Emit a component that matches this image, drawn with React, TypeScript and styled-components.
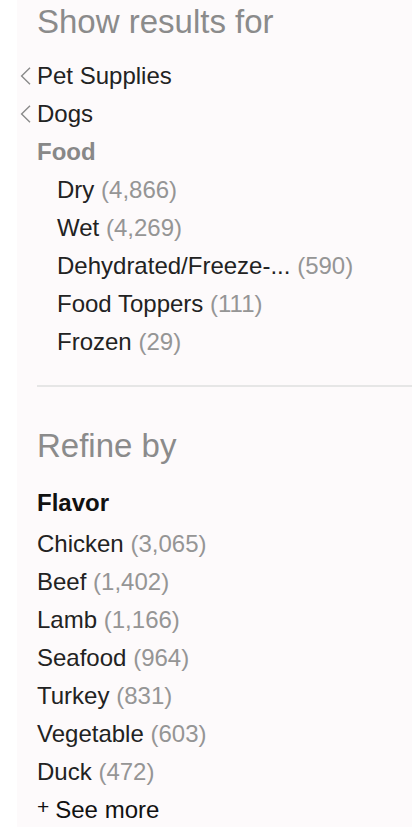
import React from "react";
import styled, { createGlobalStyle } from "styled-components";

const GlobalStyle = createGlobalStyle`
  html, body {
    margin: 0;
    padding: 0;
    background: #ffffff;
  }
  body {
    font-family: "Liberation Sans", Arial, Helvetica, sans-serif;
    -webkit-font-smoothing: antialiased;
  }
`;

const Panel = styled.aside`
  margin-left: 17px;
  margin-right: 2px;
  min-height: 827px;
  box-sizing: border-box;
  background: #fdfafb;
  padding: 2px 0 0 20px;
  overflow: hidden;
`;

const Heading = styled.h2`
  margin: 0;
  font-size: 33px;
  line-height: 40px;
  font-weight: 400;
  color: #8b8b8b;
  white-space: nowrap;
`;

const RefineHeading = styled(Heading)`
  margin-top: 39px;
`;

const NavList = styled.ul`
  list-style: none;
  margin: 15px 0 0;
  padding: 0;
`;

const NavItem = styled.li<{ $indent?: boolean; $back?: boolean }>`
  display: flex;
  align-items: center;
  height: 38px;
  font-size: 24px;
  color: #222222;
  white-space: nowrap;
  margin-left: ${(p) => (p.$back ? "-17px" : p.$indent ? "20px" : "0")};
`;

const Current = styled.span`
  font-weight: 700;
  color: #888888;
`;

const Chevron = styled.svg`
  width: 11px;
  height: 18px;
  margin-right: 6px;
  flex: none;
`;

const Count = styled.span`
  color: #959595;
  margin-left: 0.28em;
`;

const Divider = styled.hr`
  border: none;
  height: 2px;
  background: #e6e6e6;
  margin: 24px 0 0;
`;

const FacetTitle = styled.div`
  margin-top: 18px;
  margin-bottom: 3px;
  height: 38px;
  display: flex;
  align-items: center;
  font-size: 24px;
  font-weight: 700;
  color: #111111;
`;

const FacetList = styled.ul`
  list-style: none;
  margin: 0;
  padding: 0;
`;

const FacetItem = styled.li`
  display: flex;
  align-items: center;
  height: 38px;
  font-size: 24px;
  color: #222222;
  white-space: nowrap;
`;

const SeeMore = styled(FacetItem)`
  color: #111111;
`;

const Plus = styled.span`
  font-size: 21px;
  position: relative;
  top: -3px;
  margin-right: 6px;
`;

const BackChevron = () => (
  <Chevron viewBox="0 0 11 18" aria-hidden="true">
    <path d="M10 0.8 L1.6 9 L10 17.2" fill="none" stroke="#8a8a8a" strokeWidth="1.4" />
  </Chevron>
);

const categories: [string, string][] = [
  ["Dry", "4,866"],
  ["Wet", "4,269"],
  ["Dehydrated/Freeze-...", "590"],
  ["Food Toppers", "111"],
  ["Frozen", "29"],
];

const flavors: [string, string][] = [
  ["Chicken", "3,065"],
  ["Beef", "1,402"],
  ["Lamb", "1,166"],
  ["Seafood", "964"],
  ["Turkey", "831"],
  ["Vegetable", "603"],
  ["Duck", "472"],
];

export default function App() {
  return (
    <>
      <GlobalStyle />
      <Panel>
        <Heading>Show results for</Heading>
        <NavList>
          <NavItem $back>
            <BackChevron />
            Pet Supplies
          </NavItem>
          <NavItem $back>
            <BackChevron />
            Dogs
          </NavItem>
          <NavItem>
            <Current>Food</Current>
          </NavItem>
          {categories.map(([name, count]) => (
            <NavItem key={name} $indent>
              {name}
              <Count>({count})</Count>
            </NavItem>
          ))}
        </NavList>
        <Divider />
        <RefineHeading>Refine by</RefineHeading>
        <FacetTitle>Flavor</FacetTitle>
        <FacetList>
          {flavors.map(([name, count]) => (
            <FacetItem key={name}>
              {name}
              <Count>({count})</Count>
            </FacetItem>
          ))}
          <SeeMore>
            <Plus>+</Plus>
            See more
          </SeeMore>
        </FacetList>
      </Panel>
    </>
  );
}
